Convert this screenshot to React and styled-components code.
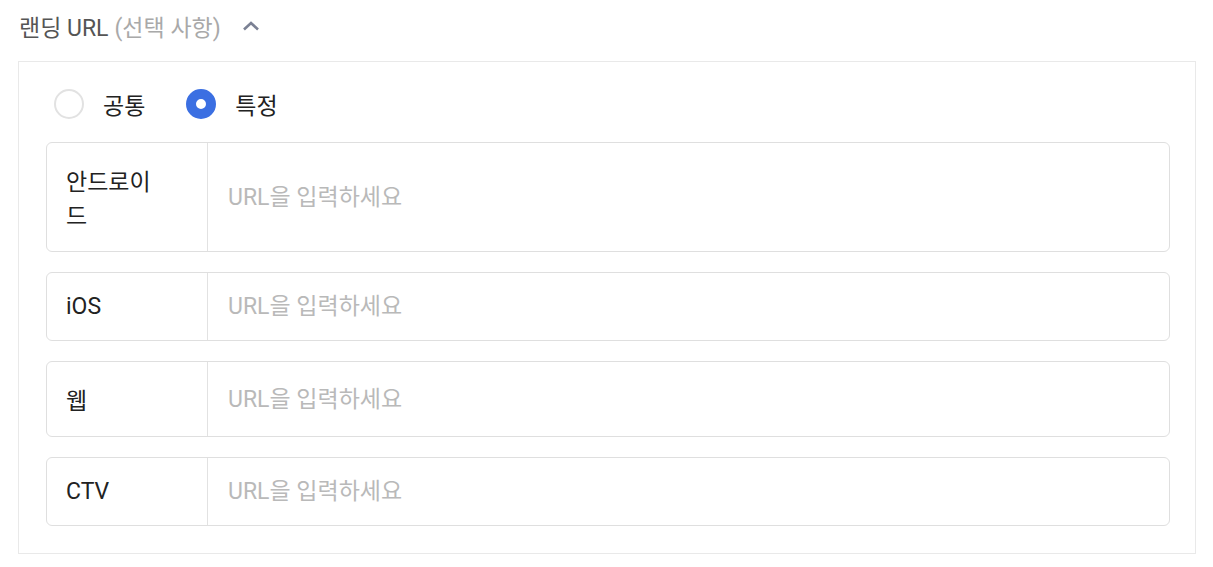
import React, { useState } from "react";
import styled, { createGlobalStyle } from "styled-components";

const Global = createGlobalStyle`
  html, body { margin: 0; padding: 0; background: #fff; }
  body { font-family: Roboto, "Noto Sans CJK KR", sans-serif; }
  * { box-sizing: border-box; }
`;

const Page = styled.div`
  padding: 9px 17px 0 18px;
`;

const Header = styled.div`
  display: flex;
  align-items: center;
  height: 33px;
  margin-bottom: 19px;
  padding-left: 1px;
`;

const Title = styled.span`
  font-size: 23px;
  color: #555;
`;

const Optional = styled.span`
  font-size: 23px;
  color: #a9a9a9;
  margin-left: 6px;
`;

const Chevron = styled.button`
  display: flex;
  align-items: center;
  border: 0;
  background: none;
  padding: 0;
  margin-left: 21px;
  cursor: pointer;
`;

const Panel = styled.div`
  border: 1px solid #e9e9e9;
  padding: 27px 25px 27px 27px;
`;

const RadioGroup = styled.div`
  display: flex;
  align-items: center;
  height: 30px;
  padding-left: 8px;
  margin-bottom: 23px;
`;

const RadioLabel = styled.label`
  display: flex;
  align-items: center;
  gap: 19px;
  margin-right: 41px;
  font-size: 23px;
  color: #222;
  cursor: pointer;
`;

const RadioCircle = styled.span`
  width: 30px;
  height: 30px;
  border-radius: 50%;
  border: ${(p) => (p.$checked ? "10px solid #3b6fe2" : "2px solid #e2e2e2")};
  background: #fff;
  flex: none;
`;

const Rows = styled.div`
  display: flex;
  flex-direction: column;
  gap: 20px;
`;

const Row = styled.div`
  display: flex;
  border: 1px solid #dfdfdf;
  border-radius: 6px;
`;

const Label = styled.div`
  width: 161px;
  flex: none;
  display: flex;
  align-items: center;
  padding: 20px 40px 20px 19px;
  border-right: 1px solid #e2e2e2;
  font-size: 23px;
  color: #222;
`;

const Input = styled.input`
  flex: 1;
  min-width: 0;
  border: 0;
  outline: none;
  background: transparent;
  padding: 0 20px;
  font-family: Roboto, "Noto Sans CJK KR", sans-serif;
  font-size: 23px;
  color: #222;
  &::placeholder { color: #b9b9b9; }
`;

const platforms = ["안드로이드", "iOS", "웹", "CTV"];

export default function App() {
  const [mode, setMode] = useState("specific");
  return (
    <Page>
      <Global />
      <Header>
        <Title>랜딩 URL</Title>
        <Optional>(선택 사항)</Optional>
        <Chevron aria-label="접기">
          <svg width="18" height="12" viewBox="0 0 18 12">
            <polyline points="2,9.5 9,3 16,9.5" fill="none" stroke="#7b8194" strokeWidth="2.6" />
          </svg>
        </Chevron>
      </Header>
      <Panel>
        <RadioGroup>
          <RadioLabel onClick={() => setMode("common")}>
            <RadioCircle $checked={mode === "common"} />
            공통
          </RadioLabel>
          <RadioLabel onClick={() => setMode("specific")}>
            <RadioCircle $checked={mode === "specific"} />
            특정
          </RadioLabel>
        </RadioGroup>
        <Rows>
          {platforms.map((p) => (
            <Row key={p}>
              <Label>{p}</Label>
              <Input placeholder="URL을 입력하세요" />
            </Row>
          ))}
        </Rows>
      </Panel>
    </Page>
  );
}
